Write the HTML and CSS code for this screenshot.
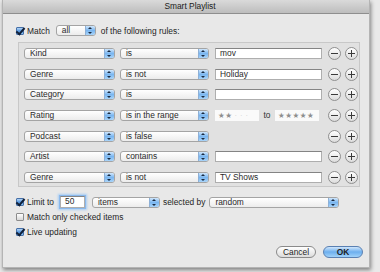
FILE: index.html
```html
<!DOCTYPE html>
<html lang="en">
<head>
    <meta charset="UTF-8">
    <title>Smart Playlist</title>
    <link rel="stylesheet" href="styles.css">
</head>
<body>
    <div class="window">
        <div class="titlebar">Smart Playlist</div>
        <div class="content">
            <div class="match-row">
                <span class="check on"></span>
                <span class="label">Match</span>
                <span class="popup popup-all">all<i class="arrows"></i></span>
                <span class="label after">of the following rules:</span>
            </div>

            <div class="rules">
                <div class="rule">
                    <span class="popup field">Kind<i class="arrows"></i></span>
                    <span class="popup op">is<i class="arrows"></i></span>
                    <span class="textfield">mov</span>
                    <span class="round minus"></span>
                    <span class="round plus"></span>
                </div>
                <div class="rule">
                    <span class="popup field">Genre<i class="arrows"></i></span>
                    <span class="popup op">is not<i class="arrows"></i></span>
                    <span class="textfield">Holiday</span>
                    <span class="round minus"></span>
                    <span class="round plus"></span>
                </div>
                <div class="rule">
                    <span class="popup field">Category<i class="arrows"></i></span>
                    <span class="popup op">is<i class="arrows"></i></span>
                    <span class="textfield"></span>
                    <span class="round minus"></span>
                    <span class="round plus"></span>
                </div>
                <div class="rule">
                    <span class="popup field">Rating<i class="arrows"></i></span>
                    <span class="popup op">is in the range<i class="arrows"></i></span>
                    <span class="range">
                        <span class="stars">★★<em>·&nbsp;·&nbsp;·</em></span>
                        <span class="to">to</span>
                        <span class="stars">★★★★★</span>
                    </span>
                    <span class="round minus"></span>
                    <span class="round plus"></span>
                </div>
                <div class="rule">
                    <span class="popup field">Podcast<i class="arrows"></i></span>
                    <span class="popup op">is false<i class="arrows"></i></span>
                    <span class="blank"></span>
                    <span class="round minus"></span>
                    <span class="round plus"></span>
                </div>
                <div class="rule">
                    <span class="popup field">Artist<i class="arrows"></i></span>
                    <span class="popup op">contains<i class="arrows"></i></span>
                    <span class="textfield"></span>
                    <span class="round minus"></span>
                    <span class="round plus"></span>
                </div>
                <div class="rule">
                    <span class="popup field">Genre<i class="arrows"></i></span>
                    <span class="popup op">is not<i class="arrows"></i></span>
                    <span class="textfield">TV Shows</span>
                    <span class="round minus"></span>
                    <span class="round plus"></span>
                </div>
            </div>

            <div class="options">
                <div class="opt-row">
                    <span class="check on"></span>
                    <span class="label">Limit to</span>
                    <span class="textfield focus">50</span>
                    <span class="popup popup-items">items<i class="arrows"></i></span>
                    <span class="label">selected by</span>
                    <span class="popup popup-random">random<i class="arrows"></i></span>
                </div>
                <div class="opt-row">
                    <span class="check"></span>
                    <span class="label">Match only checked items</span>
                </div>
                <div class="opt-row">
                    <span class="check on"></span>
                    <span class="label">Live updating</span>
                </div>
            </div>

            <div class="buttons">
                <span class="btn">Cancel</span>
                <span class="btn default">OK</span>
            </div>
        </div>
    </div>
</body>
</html>
```

FILE: styles.css
```css
* {
    margin: 0;
    padding: 0;
    box-sizing: border-box;
    font-family: 'Liberation Sans', Arial, sans-serif;
}

body {
    background-color: #e9e9e9;
    width: 380px;
    height: 272px;
    overflow: hidden;
    font-size: 8.4px;
    color: #1e1e1e;
}

.window {
    margin-left: 2px;
    width: 368px;
    height: 268px;
    background-color: #e8e8e8;
    border: 1px solid #b4b4b4;
    border-top: none;
    box-shadow: 1px 2px 4px rgba(0, 0, 0, 0.45);
    display: flex;
    flex-direction: column;
}

.titlebar {
    height: 14px;
    line-height: 13px;
    text-align: center;
    padding-left: 8px;
    color: #202020;
    background: linear-gradient(#dadada, #bdbdbd);
    border-bottom: 1px solid #8e8e8e;
}

.content {
    padding: 11px 6px 0 12px;
    display: flex;
    flex-direction: column;
}

/* shared controls */

.label {
    white-space: nowrap;
}

.check {
    width: 8px;
    height: 8px;
    flex: none;
    border: 1px solid #8c8c8c;
    border-radius: 1px;
    background: linear-gradient(#ffffff, #d8d8d8);
    position: relative;
}

.check.on {
    border-color: #4670a8;
    background: linear-gradient(#b3d5f6, #4f93de 55%, #94c9f6);
}

.check.on::after {
    content: "";
    position: absolute;
    left: 1px;
    top: -2px;
    width: 3px;
    height: 7px;
    border-right: 2px solid #10203a;
    border-bottom: 2px solid #10203a;
    transform: rotate(40deg);
}

.popup {
    height: 11px;
    line-height: 9px;
    padding-left: 5px;
    border: 1px solid #a4a4a4;
    border-radius: 3px;
    background: linear-gradient(#ffffff, #ececec);
    display: flex;
    justify-content: space-between;
    align-items: stretch;
    flex: none;
    overflow: hidden;
    white-space: nowrap;
    color: #2a2a2a;
}

.arrows {
    width: 10px;
    flex: none;
    background: linear-gradient(#cfe6fc, #7ab6f0 50%, #a9d4f9);
    border-left: 1px solid #8eb0d6;
    position: relative;
}

.arrows::before,
.arrows::after {
    content: "";
    position: absolute;
    left: 2px;
    border-left: 2px solid transparent;
    border-right: 2px solid transparent;
}

.arrows::before {
    top: 1px;
    border-bottom: 2px solid #1a2a40;
}

.arrows::after {
    bottom: 1px;
    border-top: 2px solid #1a2a40;
}

.textfield {
    height: 11px;
    line-height: 9px;
    padding-left: 4px;
    background-color: #fff;
    border: 1px solid #aeaeae;
    border-top-color: #848484;
    flex: none;
    color: #2a2a2a;
}

.round {
    width: 13px;
    height: 13px;
    flex: none;
    border: 1px solid #8f8f8f;
    border-radius: 50%;
    background: linear-gradient(#ffffff, #dcdcdc);
    position: relative;
}

.round::before,
.round::after {
    content: "";
    position: absolute;
    background-color: #3a3a3a;
}

.round::before {
    left: 2px;
    top: 5px;
    width: 7px;
    height: 1px;
}

.plus::after {
    left: 5px;
    top: 2px;
    width: 1px;
    height: 7px;
}

/* match line */

.match-row {
    height: 11px;
    display: flex;
    align-items: center;
    gap: 3px;
    padding-left: 1px;
}

.popup-all {
    width: 40px;
    margin-left: 3px;
}

.match-row .after {
    margin-left: 2px;
}

/* rule box */

.rules {
    margin: 6px 3px 0 3px;
    height: 145px;
    padding: 5px 5px 0 5px;
    border: 1px solid #c8c8c8;
    background-color: #e1e1e1;
    display: flex;
    flex-direction: column;
    gap: 9.67px;
}

.rule {
    height: 11px;
    display: flex;
    align-items: center;
}

.rule .field {
    width: 91px;
}

.rule .op {
    width: 89px;
    margin-left: 5px;
}

.rule .textfield,
.rule .blank,
.rule .range {
    width: 107px;
    margin-left: 6px;
    flex: none;
}

.rule .minus {
    margin-left: 6px;
}

.rule .plus {
    margin-left: 4px;
}

.range {
    height: 11px;
    display: flex;
    align-items: center;
}

.stars {
    width: 44px;
    height: 11px;
    line-height: 11px;
    padding-left: 3px;
    background-color: #fafafa;
    color: #8e8e8e;
    font-size: 7.5px;
    letter-spacing: 0.5px;
    font-family: 'DejaVu Sans', sans-serif;
}

.stars em {
    font-style: normal;
    color: #d0d0d0;
    margin-left: 2px;
}

.to {
    width: 16px;
    text-align: center;
    color: #333;
}

/* options */

.options {
    margin-top: 9px;
    display: flex;
    flex-direction: column;
    gap: 3px;
    padding-left: 1px;
}

.opt-row {
    height: 12px;
    display: flex;
    align-items: center;
    gap: 3px;
}

.textfield.focus {
    width: 25px;
    height: 12px;
    margin-left: 3px;
    box-shadow: 0 0 0 1px #8ab8ec, 0 0 2px 2px #a8cdf4;
}

.popup-items {
    width: 68px;
    margin-left: 4px;
}

.popup-random {
    width: 130px;
    margin-left: 1px;
}

/* buttons */

.buttons {
    margin-top: 8px;
    display: flex;
    justify-content: flex-end;
    gap: 7px;
}

.btn {
    width: 40px;
    height: 12px;
    line-height: 10px;
    text-align: center;
    border: 1px solid #8a8a8a;
    border-radius: 6px;
    background: linear-gradient(#ffffff, #dcdcdc);
}

.btn.default {
    font-weight: bold;
    border-color: #5a80b2;
    background: linear-gradient(#d0e6fc, #6dafee 50%, #a0d2fa);
}
```
